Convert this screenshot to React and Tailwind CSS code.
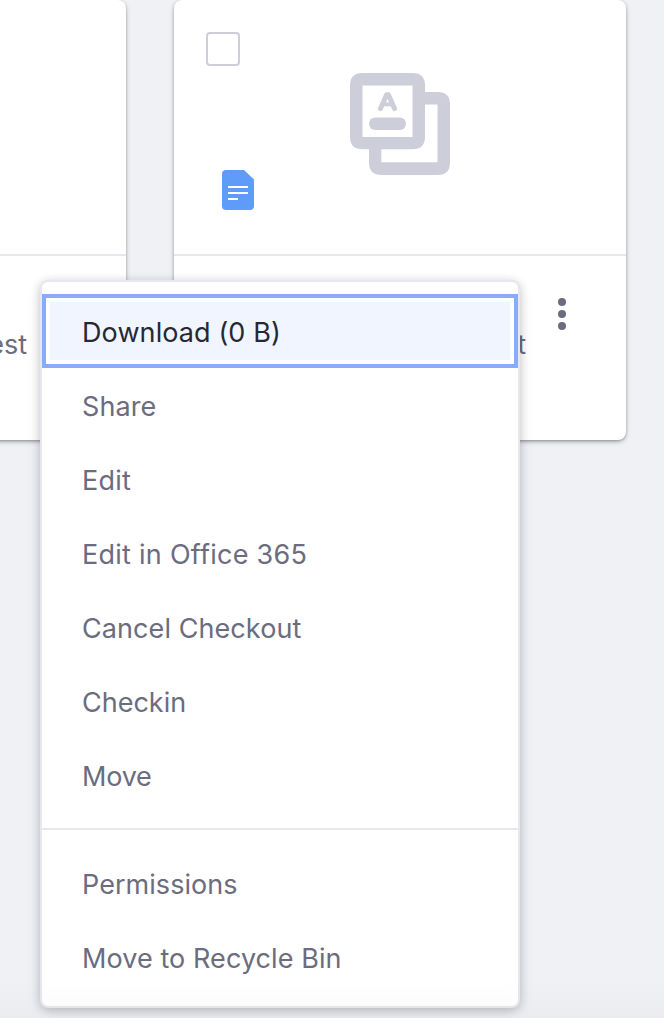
const primaryItems = [
  { label: "Download (0 B)", active: true, tracking: "tracking-[0.1px]" },
  { label: "Share", tracking: "tracking-[0.1px]" },
  { label: "Edit", tracking: "tracking-[0.2px]" },
  { label: "Edit in Office 365", tracking: "tracking-[0.26px]" },
  { label: "Cancel Checkout", tracking: "tracking-[0.08px]" },
  { label: "Checkin", tracking: "tracking-normal" },
  { label: "Move", tracking: "tracking-[-0.2px]" },
];

const secondaryItems = [
  { label: "Permissions", tracking: "tracking-[0.05px]" },
  { label: "Move to Recycle Bin", tracking: "tracking-[0.08px]" },
];

function MenuItem({ label, active, tracking }) {
  return active ? (
    <button className="flex h-[74px] w-full shrink-0 items-center border-4 border-[#87acfa] bg-white p-1 text-left text-[#272833]">
      <span className={`flex h-full w-full items-center bg-[#f0f5ff] pl-8 pt-[3px] ${tracking}`}>
        {label}
      </span>
    </button>
  ) : (
    <button
      className={`flex h-[74px] w-full shrink-0 items-center pl-10 pt-[3px] text-left text-[#6b6c7e] ${tracking}`}
    >
      {label}
    </button>
  );
}

function TranslateIcon() {
  return (
    <svg className="h-[102px] w-[100px]" viewBox="0 0 100 102">
      <path
        fill="#cdced9"
        fillRule="evenodd"
        d="M12.5 0H62.5Q75 0 75 12.5V19H87.5Q100 19 100 31.500V89.500Q100 102 87.500 102H31.500Q19 102 19 89.500V76.300H12.500Q0 76.300 0 63.800V12.500Q0 0 12.500 0ZM12.500 12.500V64H62.500V12.500ZM75 31.500V63.800Q75 76.300 62.500 76.300H31.300V89.300H87.500V31.500Z"
      />
      <rect x="19" y="44.500" width="37" height="12.500" rx="6.250" fill="#cdced9" />
      <path
        d="M30.500 35.500L36.600 21.700H38.400L44.500 35.500"
        fill="none"
        stroke="#cdced9"
        strokeWidth="5"
        strokeLinecap="round"
        strokeLinejoin="round"
      />
      <path d="M33 31.300H42" stroke="#cdced9" strokeWidth="4" />
    </svg>
  );
}

function DocumentIcon() {
  return (
    <svg className="h-10 w-8" viewBox="0 0 32 40">
      <path fill="#5f9cf9" d="M4 0H22L32 9.500V36Q32 40 28 40H4Q0 40 0 36V4Q0 0 4 0Z" />
      <path fill="#fff" d="M6 16H26V18H6ZM6 22H26V24H6ZM6 28H16V30H6Z" />
    </svg>
  );
}

const cardShadow =
  "rounded-[8px] bg-white shadow-[0_2px_6px_-2px_rgba(0,0,0,0.45),0_1px_3px_rgba(0,0,0,0.2)]";

export default function App() {
  return (
    <main className="relative h-[1018px] w-[664px] overflow-hidden bg-[#f0f1f5] font-['Inter',sans-serif] text-[27px] leading-[40px] text-[#6b6c7e]">
      <div className="-ml-12 flex gap-12">
        <section className={`h-[440px] w-[174px] shrink-0 ${cardShadow}`}>
          <div className="h-[256px] border-b-2 border-[#e7e7ed]" />
          <div className="flex w-[75px] justify-end pt-[69px]">est</div>
        </section>
        <section className={`h-[440px] w-[452px] shrink-0 ${cardShadow}`}>
          <div className="flex h-[256px] border-b-2 border-[#e7e7ed] pl-8 pt-8">
            <div className="flex w-[144px] flex-col">
              <div className="size-[34px] rounded-[4px] border-2 border-[#cdced9]" />
              <div className="pl-4 pt-[104px]">
                <DocumentIcon />
              </div>
            </div>
            <div className="pt-[41px]">
              <TranslateIcon />
            </div>
          </div>
          <div className="flex">
            <div className="flex w-[352px] justify-end pt-[69px]">t</div>
            <div className="flex flex-col gap-1 pl-8 pt-[42px]">
              <span className="size-2 rounded-full bg-[#6b6c7e]" />
              <span className="size-2 rounded-full bg-[#6b6c7e]" />
              <span className="size-2 rounded-full bg-[#6b6c7e]" />
            </div>
          </div>
        </section>
      </div>

      <nav className="absolute left-10 top-[280px] flex h-[728px] w-[480px] flex-col rounded-[8px] border-2 border-[#e7e7ed] bg-white py-3 shadow-[0_2px_8px_rgba(39,40,51,0.2),0_4px_18px_-4px_rgba(39,40,51,0.18)]">
        {primaryItems.map((item) => (
          <MenuItem key={item.label} {...item} />
        ))}
        <hr className="my-4 shrink-0 border-t-2 border-[#e7e7ed]" />
        {secondaryItems.map((item) => (
          <MenuItem key={item.label} {...item} />
        ))}
      </nav>
      <div className="pointer-events-none absolute inset-x-0 bottom-0 h-10 bg-linear-to-b from-transparent to-black/2" />
    </main>
  );
}
